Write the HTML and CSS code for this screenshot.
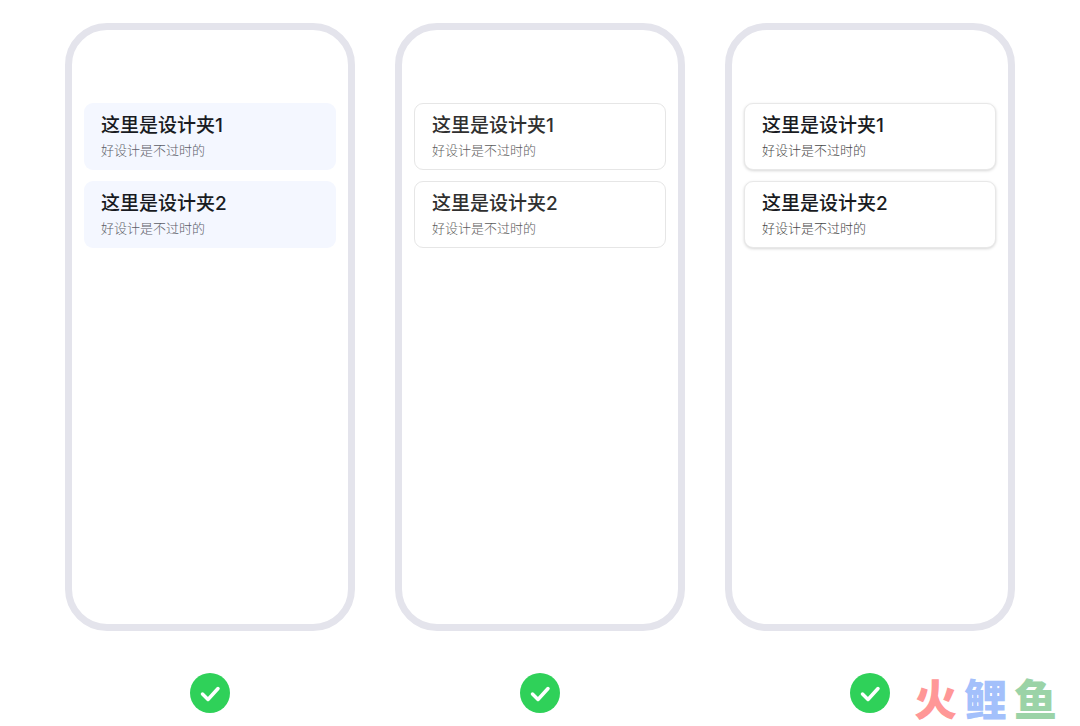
FILE: index.html
```html
<!DOCTYPE html>
<html lang="zh-CN">
<head>
<meta charset="utf-8">
<meta name="viewport" content="width=device-width, initial-scale=1">
<title>这里是设计夹</title>
<link rel="stylesheet" href="styles.css">
</head>
<body>
<main class="board">
  <section class="sample tinted">
    <div class="phone">
      <article class="card"><h2 class="title">这里是设计夹1</h2><p class="note">好设计是不过时的</p></article>
      <article class="card"><h2 class="title">这里是设计夹2</h2><p class="note">好设计是不过时的</p></article>
    </div>
    <svg class="check" viewBox="0 0 42 42" aria-hidden="true"><circle class="disc" cx="21" cy="21" r="20"/><path class="tick" d="M13.5 22 19 27.5 29 16.5"/></svg>
  </section>
  <section class="sample outlined">
    <div class="phone">
      <article class="card"><h2 class="title">这里是设计夹1</h2><p class="note">好设计是不过时的</p></article>
      <article class="card"><h2 class="title">这里是设计夹2</h2><p class="note">好设计是不过时的</p></article>
    </div>
    <svg class="check" viewBox="0 0 42 42" aria-hidden="true"><circle class="disc" cx="21" cy="21" r="20"/><path class="tick" d="M13.5 22 19 27.5 29 16.5"/></svg>
  </section>
  <section class="sample raised">
    <div class="phone">
      <article class="card"><h2 class="title">这里是设计夹1</h2><p class="note">好设计是不过时的</p></article>
      <article class="card"><h2 class="title">这里是设计夹2</h2><p class="note">好设计是不过时的</p></article>
    </div>
    <svg class="check" viewBox="0 0 42 42" aria-hidden="true"><circle class="disc" cx="21" cy="21" r="20"/><path class="tick" d="M13.5 22 19 27.5 29 16.5"/></svg>
  </section>
  <div class="watermark"><span class="red">火</span><span class="blue">鲤</span><span class="green">鱼</span></div>
</main>
</body>
</html>
```

FILE: styles.css
```css
* {
  box-sizing: border-box;
}

body {
  margin: 0;
  background: #fff;
  font-family: Inter, "Noto Sans CJK SC", sans-serif;
}

.board {
  position: relative;
  display: grid;
  grid-template-columns: repeat(3, 1fr);
  gap: 40px;
  padding: 23px 65px 12px;
}

.sample {
  display: flex;
  flex-direction: column;
  align-items: center;
  gap: 41px;
}

.phone {
  display: flex;
  flex-direction: column;
  gap: 11px;
  width: 100%;
  aspect-ratio: 290 / 608;
  padding: 73px 12px 12px;
  border: 7px solid #e4e4ec;
  border-radius: 42px;
  background: #fff;
}

.card {
  padding: 8px 17px;
  border: 1px solid transparent;
  border-radius: 9px;
  background: #fff;
}

.title {
  margin: 0;
  color: #191b22;
  font-size: 19px;
  font-weight: 500;
  line-height: 27px;
}

.note {
  margin: 0;
  color: #5c5e68;
  font-size: 13px;
  font-weight: 300;
  line-height: 22px;
}

.tinted .card {
  padding-left: 16px;
  background: #f4f7ff;
}

.outlined .card {
  border-color: #e6e6e6;
}

.outlined .title {
  color: #303030;
}

.outlined .note {
  color: #5c5c5c;
}

.raised .card {
  border-color: #e8e8e8;
  box-shadow: 0 1px 3px rgba(0, 0, 0, 0.16);
}

.raised .note {
  color: #484848;
}

.check {
  width: 42px;
  height: 42px;
}

.disc {
  fill: #2fd159;
}

.tick {
  fill: none;
  stroke: #fff;
  stroke-width: 3.5;
  stroke-linecap: round;
  stroke-linejoin: round;
}

.watermark {
  position: absolute;
  right: 23px;
  bottom: 4px;
  display: flex;
  gap: 7px;
  font-size: 43px;
  font-weight: 900;
  line-height: 43px;
}

.red {
  color: #ff9797;
}

.blue {
  color: #a3c0fb;
}

.green {
  color: #9bd3a7;
}
```
